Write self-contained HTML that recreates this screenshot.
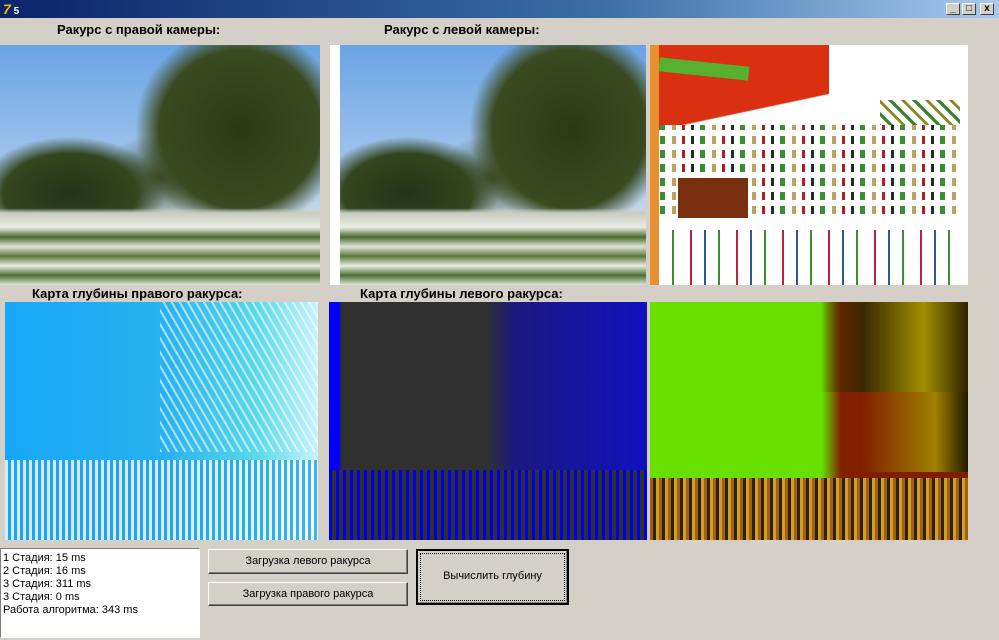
<!DOCTYPE html><html><head><meta charset="utf-8"><style>
body{margin:0;width:999px;height:640px;background:#d4d0c8;position:relative;overflow:hidden;font-family:"Liberation Sans",sans-serif;font-size:11px}
.a{position:absolute}
.tb{left:0;top:0;width:999px;height:18px;background:linear-gradient(90deg,#0a246a,#3a6ea5 60%,#a6caf0)}
.wb{top:3px;width:14px;height:12px;background:#d4d0c8;border:1px solid;border-color:#fff #404040 #404040 #fff;box-sizing:border-box;font-size:10px;line-height:10px;text-align:center;font-weight:bold}
.lbl{font-size:13px;font-weight:bold;color:#000}
.photo{background:
linear-gradient(180deg,transparent 0,transparent 68%,#c8ccc0 70%,#e8ece4 76%,#4c6a2c 80%,#dfe3da 84%,#5a7a3a 88%,#e8ebe4 92%,#4c7030 96%,#e0e4dc 100%),
radial-gradient(ellipse 42% 55% at 75% 35%,#2b3a16 0,#3a4a20 60%,transparent 78%),
radial-gradient(ellipse 35% 28% at 22% 62%,#243318 0,#33461e 60%,transparent 85%),
radial-gradient(ellipse 20% 20% at 50% 55%,#3a4a24 0,transparent 90%),
linear-gradient(180deg,#6aa4e4,#a8c8ec 55%,#c8d8e6 70%)}
.btn{background:#d4d0c8;border:1px solid;border-color:#fff #404040 #404040 #fff;box-shadow:inset -1px -1px #808080;box-sizing:border-box;text-align:center;font-size:11px}
</style></head><body>
<div class="a tb"></div>
<div class="a" style="left:3px;top:1px;color:#e8c000;font-weight:bold;font-size:14px;font-style:italic">7<span style="color:#fff;font-size:10px;font-style:normal"> 5</span></div>
<div class="a wb" style="left:946px">_</div><div class="a wb" style="left:962px">□</div><div class="a wb" style="left:980px">x</div>
<div class="a lbl" style="left:57px;top:22px">Ракурс с правой камеры:</div>
<div class="a lbl" style="left:384px;top:22px">Ракурс с левой камеры:</div>
<div class="a photo" style="left:0;top:45px;width:320px;height:240px"></div>
<div class="a" style="left:330px;top:45px;width:10px;height:240px;background:#fff"></div>
<div class="a photo" style="left:340px;top:45px;width:306px;height:240px"></div>
<div class="a" style="left:650px;top:45px;width:318px;height:240px;background:#fff"></div>
<div class="a" style="left:650px;top:45px;width:9px;height:240px;background:#e89030"></div>
<div class="a" style="left:659px;top:45px;width:170px;height:100px;background:linear-gradient(168deg,#d83010 62%,transparent 63%)"></div>
<div class="a" style="left:659px;top:62px;width:90px;height:14px;background:#58b030;transform:rotate(6deg)"></div>
<div class="a" style="left:880px;top:100px;width:80px;height:60px;background:repeating-linear-gradient(45deg,#fff 0 6px,#8a8a20 6px 9px,#fff 9px 14px,#3a8030 14px 17px)"></div>
<div class="a" style="left:660px;top:125px;width:300px;height:95px;background:repeating-linear-gradient(90deg,#3a9030 0 5px,#fff 5px 12px,#c0a060 12px 16px,#fff 16px 22px,#b02020 22px 25px,#fff 25px 31px,#203020 31px 34px,#fff 34px 40px),repeating-linear-gradient(0deg,#fff 0 6px,transparent 6px 14px);background-blend-mode:lighten"></div>
<div class="a" style="left:678px;top:178px;width:70px;height:40px;background:#7a3010"></div>
<div class="a" style="left:660px;top:230px;width:300px;height:55px;background:repeating-linear-gradient(90deg,#fff 0 12px,#3a9030 12px 14px,#fff 14px 30px,#c02040 30px 32px,#fff 32px 44px,#2a5a90 44px 46px)"></div>
<div class="a lbl" style="left:32px;top:286px">Карта глубины правого ракурса:</div>
<div class="a lbl" style="left:360px;top:286px">Карта глубины левого ракурса:</div>
<div class="a" style="left:5px;top:302px;width:313px;height:238px;background:linear-gradient(90deg,#18a8f8 0,#28b0f0 50%,#58d8e8 80%,#c8f4ff 100%);"></div>
<div class="a" style="left:160px;top:302px;width:158px;height:150px;background:repeating-linear-gradient(60deg,#fff 0 2px,transparent 2px 7px);opacity:.6"></div>
<div class="a" style="left:5px;top:460px;width:313px;height:80px;background:repeating-linear-gradient(90deg,#fff 0 3px,#20a0f0 3px 6px);opacity:.8"></div>
<div class="a" style="left:329px;top:302px;width:318px;height:238px;background:linear-gradient(90deg,#0000ff 0,#0000ff 3%,#303030 4%,#303030 50%,#1a1a80 58%,#1010c0 100%)"></div>
<div class="a" style="left:329px;top:470px;width:318px;height:70px;background:repeating-linear-gradient(90deg,#0000e8 0 3px,#303030 3px 7px)"></div>
<div class="a" style="left:650px;top:302px;width:318px;height:238px;background:linear-gradient(90deg,#68e000 0,#68e000 54%,#802000 60%,#801c00 100%)"></div>
<div class="a" style="left:820px;top:302px;width:148px;height:90px;background:linear-gradient(90deg,transparent,#3a2a00 30%,#a09000 70%,#302000)"></div>
<div class="a" style="left:860px;top:392px;width:108px;height:80px;background:linear-gradient(90deg,#801c00,#a08000 70%,#201800)"></div>
<div class="a" style="left:650px;top:478px;width:318px;height:62px;background:repeating-linear-gradient(90deg,#a06018 0 3px,#302000 3px 6px,#d0a020 6px 9px)"></div>
<div class="a" style="left:0;top:548px;width:200px;height:90px;background:#fff;border:1px solid;border-color:#808080 #fff #fff #808080;box-sizing:border-box;padding:3px 2px;line-height:13px;font-size:11px">1 Стадия: 15 ms<br>2 Стадия: 16 ms<br>3 Стадия: 311 ms<br>3 Стадия: 0 ms<br>Работа алгоритма: 343 ms</div>
<div class="a btn" style="left:208px;top:549px;width:200px;height:25px;line-height:23px">Загрузка левого ракурса</div>
<div class="a btn" style="left:208px;top:582px;width:200px;height:24px;line-height:22px">Загрузка правого ракурса</div>
<div class="a btn" style="left:416px;top:549px;width:153px;height:56px;line-height:50px;border:2px solid #000;outline:1px dotted #000;outline-offset:-5px">Вычислить глубину</div>
</body></html>
